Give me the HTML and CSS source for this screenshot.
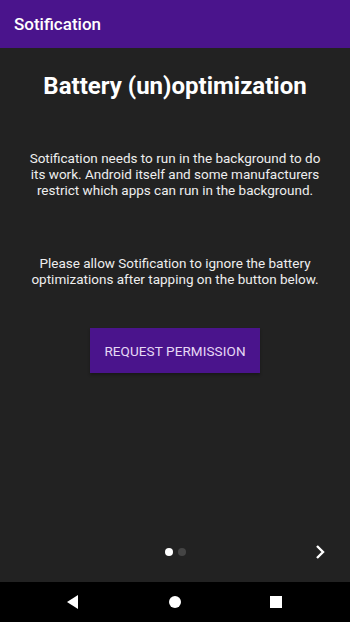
FILE: index.html
```html
<!DOCTYPE html>
<html>
<head>
<meta charset="utf-8">
<link rel="stylesheet" href="styles.css">
</head>
<body>
<div class="screen">
  <header class="appbar">Sotification</header>
  <main class="content">
    <h1 class="title">Battery (un)optimization</h1>
    <p class="text first">Sotification needs to run in the background to do its work. Android itself and some manufacturers restrict which apps can run in the background.</p>
    <p class="text second">Please allow Sotification to ignore the battery optimizations after tapping on the button below.</p>
    <button class="btn">REQUEST PERMISSION</button>
    <div class="spacer"></div>
    <div class="pager">
      <div class="dots"><span class="dot on"></span><span class="dot"></span></div>
      <svg class="next" width="14" height="16" viewBox="0 0 14 16"><path d="M4 2 L10 8 L4 14" fill="none" stroke="#fff" stroke-width="2.4"/></svg>
    </div>
  </main>
  <nav class="navbar">
    <svg width="16" height="16" viewBox="0 0 16 16"><path d="M13 1 L13 15 L2 8 Z" fill="#fff"/></svg>
    <svg width="14" height="14" viewBox="0 0 14 14"><circle cx="7" cy="7" r="6" fill="#fff"/></svg>
    <svg width="14" height="14" viewBox="0 0 14 14"><rect x="1" y="1" width="12" height="12" fill="#fff"/></svg>
  </nav>
</div>
</body>
</html>
```
FILE: styles.css
```css
html, body { margin: 0; padding: 0; }
body { font-family: Roboto, "Noto Sans", sans-serif; background: #212121; }
.screen { width: 350px; height: 622px; display: flex; flex-direction: column; }
.appbar { height: 48px; background: #4a148c; color: #fff; font-size: 17px; font-weight: 500; display: flex; align-items: center; padding-left: 14px; box-sizing: border-box; flex: none; }
.content { flex: 1; background: #222222; display: flex; flex-direction: column; align-items: center; }
.title { margin: 23px 0 0; color: #fff; font-size: 24px; font-weight: 700; line-height: 30px; text-align: center; }
.text { color: #eee; font-size: 13.5px; line-height: 16px; text-align: center; margin: 0; padding: 0 28px; }
.first { margin-top: 49px; }
.second { margin-top: 57px; }
.btn { margin-top: 41px; width: 170px; height: 45px; border: none; background: #4a148c; color: #e6d8f5; font-family: Roboto, sans-serif; font-size: 13.5px; font-weight: 400; letter-spacing: 0.1px; padding: 0; box-shadow: 0 2px 3px rgba(0,0,0,0.3); }
.spacer { flex: 1; }
.pager { width: 100%; height: 40px; position: relative; display: flex; align-items: center; justify-content: center; margin-bottom: 10px; }
.dots { display: flex; gap: 5px; margin-left: 0; }
.dot { width: 8px; height: 8px; border-radius: 50%; background: #444; }
.dot.on { background: #fff; }
.next { position: absolute; right: 23px; top: 12px; }
.navbar { height: 40px; background: #000; flex: none; display: flex; align-items: center; justify-content: space-between; padding: 0 67px 0 65px; box-sizing: border-box; }
```
